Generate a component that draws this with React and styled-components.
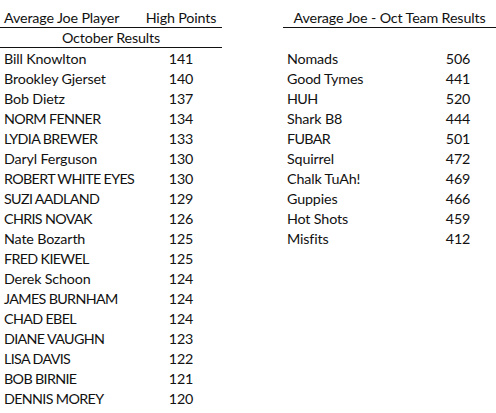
import React from 'react';
import styled, { createGlobalStyle } from 'styled-components';

const GlobalStyle = createGlobalStyle`
	body {
		margin: 0;
		background: #ffffff;
		font-family: 'Lato', 'Open Sans', sans-serif;
		color: #111111;
	}
`;

const Sheet = styled.div`
	display: grid;
	grid-template-columns: 140px 82px 61px 137px 76px;
	grid-auto-rows: 20px;
	padding-top: 8px;
	width: 496px;
	font-size: 14.3px;
	letter-spacing: -0.15px;
`;

const Cell = styled.div`
	display: flex;
	align-items: center;
	justify-content: ${({ $align }) => ($align === 'center' ? 'center' : 'flex-start')};
	padding-left: ${({ $align }) => ($align === 'center' ? '0' : '4px')};
	white-space: nowrap;
	box-sizing: border-box;
	border-bottom: ${({ $line }) => ($line ? '1px solid #111' : 'none')};
	grid-column: ${({ $span }) => $span || 'auto'};
	letter-spacing: ${({ $caps }) => ($caps ? '-0.65px' : 'inherit')};
`;

const players = [
	['Bill Knowlton', 141],
	['Brookley Gjerset', 140],
	['Bob Dietz', 137],
	['NORM FENNER', 134],
	['LYDIA BREWER', 133],
	['Daryl Ferguson', 130],
	['ROBERT WHITE EYES', 130],
	['SUZI AADLAND', 129],
	['CHRIS NOVAK', 126],
	['Nate Bozarth', 125],
	['FRED KIEWEL', 125],
	['Derek Schoon', 124],
	['JAMES BURNHAM', 124],
	['CHAD EBEL', 124],
	['DIANE VAUGHN', 123],
	['LISA DAVIS', 122],
	['BOB BIRNIE', 121],
	['DENNIS MOREY', 120],
];

const teams = [
	['Nomads', 506],
	['Good Tymes', 441],
	['HUH', 520],
	['Shark B8', 444],
	['FUBAR', 501],
	['Squirrel', 472],
	['Chalk TuAh!', 469],
	['Guppies', 466],
	['Hot Shots', 459],
	['Misfits', 412],
];

const isCaps = (s) => s === s.toUpperCase();

function App() {
	return (
		<>
			<GlobalStyle />
			<Sheet>
				<Cell $line>Average Joe Player</Cell>
				<Cell $line $align="center">High Points</Cell>
				<Cell />
				<Cell $line $span="4 / span 2" $align="center">
					Average Joe - Oct Team Results
				</Cell>

				<Cell $line $span="1 / span 2" $align="center">October Results</Cell>
				<Cell $span="3 / span 3" />

				{players.map(([name, pts], i) => {
					const team = teams[i];
					return (
						<React.Fragment key={name}>
							<Cell $caps={isCaps(name)}>{name}</Cell>
							<Cell $align="center">{pts}</Cell>
							<Cell />
							<Cell $caps={team && isCaps(team[0])}>{team ? team[0] : ''}</Cell>
							<Cell $align="center">{team ? team[1] : ''}</Cell>
						</React.Fragment>
					);
				})}
			</Sheet>
		</>
	);
}

export default App;
